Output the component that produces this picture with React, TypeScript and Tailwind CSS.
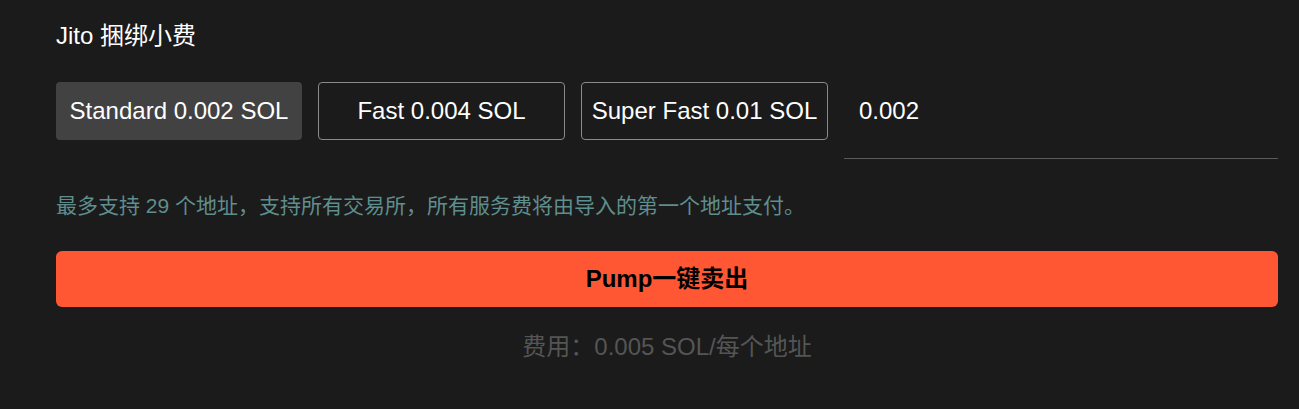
import React from "react";

const font = { fontFamily: '"Liberation Sans", Arial, "Noto Sans CJK SC", sans-serif' };

export default function App() {
  return (
    <div
      className="w-full h-[409px] bg-[#1b1b1b] pl-[56px] pr-[21px] pt-[22px] text-white"
      style={font}
    >
      <div className="text-[24px] leading-[28px] text-white">Jito 捆绑小费</div>
      <div className="mt-[32px] flex items-start gap-[16px]">
        <button className="h-[58px] w-[246px] rounded-[4px] bg-[#424242] text-[24px] text-white">
          Standard 0.002 SOL
        </button>
        <button className="h-[58px] w-[247px] rounded-[4px] border border-[#8a8a8a] bg-transparent text-[24px] text-white">
          Fast 0.004 SOL
        </button>
        <button className="h-[58px] w-[247px] rounded-[4px] border border-[#8a8a8a] bg-transparent text-[24px] text-white">
          Super Fast 0.01 SOL
        </button>
        <div className="flex-1 flex flex-col">
          <div className="h-[58px] flex items-center pl-[15px] text-[24px] text-white">0.002</div>
          <div className="h-[19px] border-b border-[#5a5a5a]"></div>
        </div>
      </div>
      <div className="mt-[33px] text-[21px] leading-[28px] text-[#5e8e8e]">
        最多支持 29 个地址，支持所有交易所，所有服务费将由导入的第一个地址支付。
      </div>
      <button className="mt-[31px] h-[56px] w-full rounded-[6px] bg-[#ff5733] text-[24px] font-bold text-black">
        Pump一键卖出
      </button>
      <div className="mt-[25px] text-center text-[24px] leading-[30px] text-[#555555]">
        费用：0.005 SOL/每个地址
      </div>
    </div>
  );
}
